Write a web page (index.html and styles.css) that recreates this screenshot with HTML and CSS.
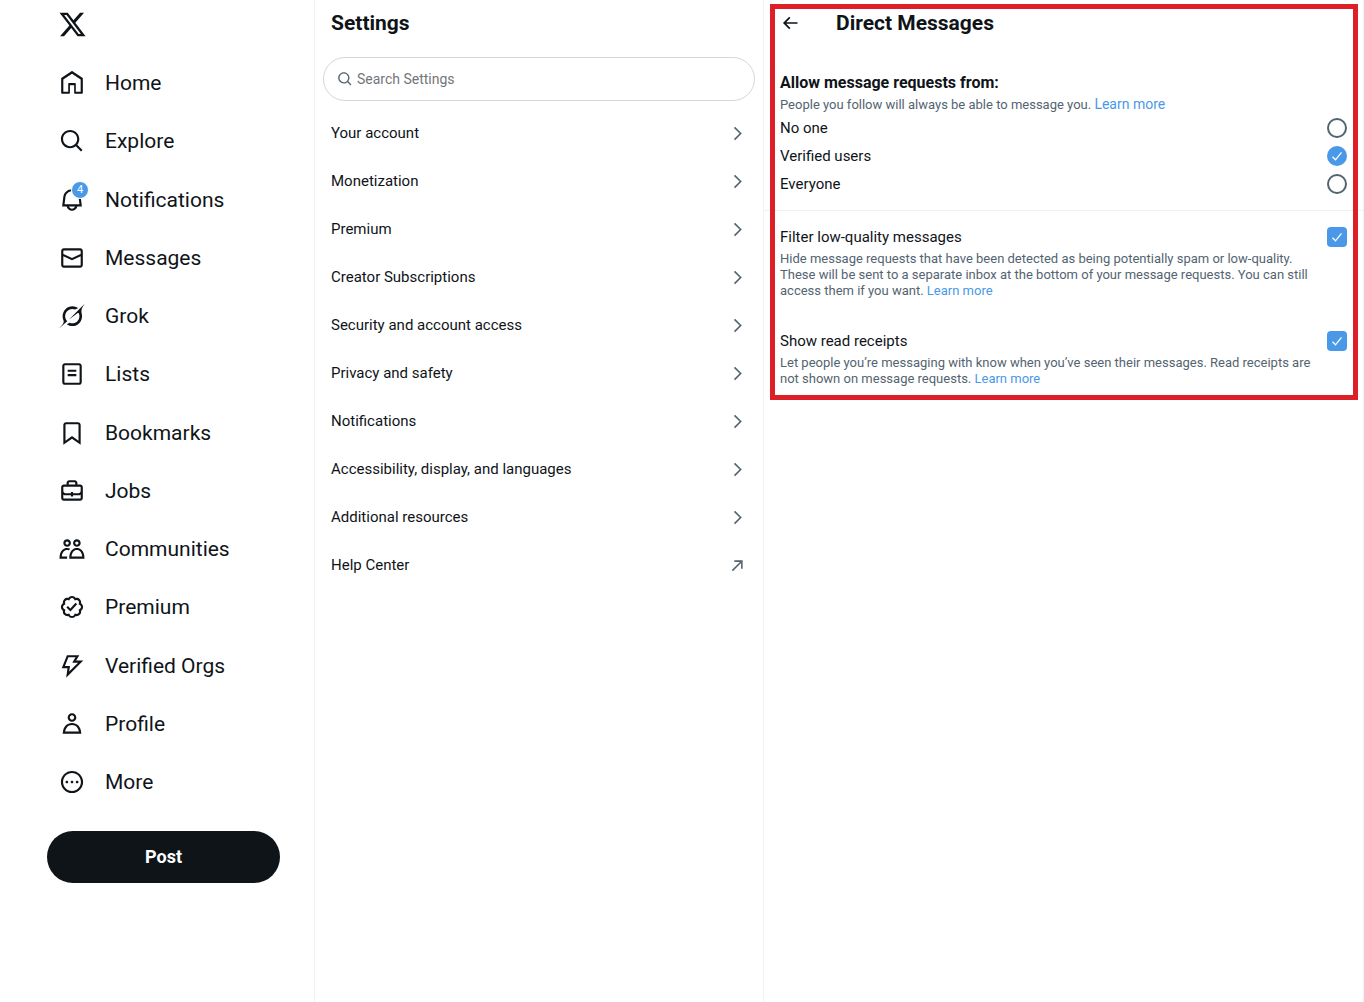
FILE: index.html
```html
<!DOCTYPE html>
<html lang="en">
<head>
<meta charset="utf-8">
<meta name="viewport" content="width=device-width, initial-scale=1">
<title>Direct Messages / X</title>
<link rel="stylesheet" href="styles.css">
</head>
<body>
<div class="app">
  <header class="sidebar">
    <a class="logo" href="#" aria-label="X">
      <svg viewBox="0 0 24 24"><path d="M18.244 2.25h3.308l-7.227 8.26 8.502 11.24H16.17l-5.214-6.817L4.99 21.75H1.68l7.73-8.835L1.254 2.25H8.08l4.713 6.231zm-1.161 17.52h1.833L7.084 4.126H5.117z"/></svg>
    </a>
    <nav class="nav" aria-label="Primary">
      <a class="nav-link" href="#"><span class="nav-icon"><svg viewBox="0 0 24 24"><path d="M21.591 7.146L12.52 1.157c-.316-.21-.724-.21-1.04 0l-9.071 5.99c-.26.173-.409.456-.409.757v13.183c0 .502.418.913.929.913H9.14c.51 0 .929-.41.929-.913v-7.075h3.909v7.075c0 .502.417.913.928.913h6.165c.511 0 .929-.41.929-.913V7.904c0-.301-.158-.584-.408-.758zM20 20l-4.5.01.011-7.097c0-.502-.418-.913-.928-.913H9.44c-.511 0-.929.41-.929.913L8.5 20H4V8.773l8.011-5.342L20 8.764z"/></svg></span>Home</a>
      <a class="nav-link" href="#"><span class="nav-icon"><svg viewBox="0 0 24 24"><path d="M10.25 3.75c-3.59 0-6.5 2.91-6.5 6.5s2.91 6.5 6.5 6.5c1.795 0 3.419-.726 4.596-1.904 1.178-1.177 1.904-2.801 1.904-4.596 0-3.59-2.91-6.5-6.5-6.5zm-8.5 6.5c0-4.694 3.806-8.5 8.5-8.5s8.5 3.806 8.5 8.5c0 1.986-.682 3.815-1.824 5.262l4.781 4.781-1.414 1.414-4.781-4.781c-1.447 1.142-3.276 1.824-5.262 1.824-4.694 0-8.5-3.806-8.5-8.5z"/></svg></span>Explore</a>
      <a class="nav-link" href="#"><span class="nav-icon"><svg viewBox="0 0 24 24"><path d="M19.993 9.042C19.48 5.017 16.054 2 11.996 2s-7.49 3.021-7.999 7.051L2.866 18H7.1c.463 2.282 2.481 4 4.9 4s4.437-1.718 4.9-4h4.236l-1.143-8.958zM12 20c-1.306 0-2.417-.835-2.829-2h5.658c-.412 1.165-1.523 2-2.829 2zm-6.866-4l.847-6.698C6.364 6.272 8.941 4 11.996 4s5.627 2.268 6.013 5.295L18.864 16H5.134z"/></svg><span class="badge">4</span></span>Notifications</a>
      <a class="nav-link" href="#"><span class="nav-icon"><svg viewBox="0 0 24 24"><path d="M1.998 5.5c0-1.381 1.119-2.5 2.5-2.5h15c1.381 0 2.5 1.119 2.5 2.5v13c0 1.381-1.119 2.5-2.5 2.5h-15c-1.381 0-2.5-1.119-2.5-2.5v-13zm2.5-.5c-.276 0-.5.224-.5.5v2.764l8 3.638 8-3.636V5.5c0-.276-.224-.5-.5-.5h-15zm15.5 5.463l-8 3.636-8-3.638V18.5c0 .276.224.5.5.5h15c.276 0 .5-.224.5-.5v-8.037z"/></svg></span>Messages</a>
      <a class="nav-link" href="#"><span class="nav-icon"><svg viewBox="0 0 33 32"><path d="M12.745 20.54l10.97-8.19c.539-.4 1.307-.244 1.564.38 1.349 3.288.746 7.241-1.938 9.955-2.683 2.714-6.417 3.31-9.83 1.954l-3.728 1.745c5.347 3.697 11.84 2.782 15.898-1.324 3.219-3.255 4.216-7.692 3.284-11.693l.008.009c-1.351-5.878.332-8.227 3.782-13.031L33 0l-4.54 4.59v-.014L12.743 20.544m-2.263 1.987c-3.837-3.707-3.175-9.446.1-12.755 2.42-2.449 6.388-3.448 9.852-1.979l3.72-1.737c-.67-.49-1.53-1.017-2.515-1.387-4.455-1.854-9.789-.931-13.41 2.728-3.483 3.523-4.579 8.94-2.697 13.561 1.405 3.454-.899 5.898-3.22 8.364C1.49 30.2.666 31.074 0 32l10.478-9.466"/></svg></span>Grok</a>
      <a class="nav-link" href="#"><span class="nav-icon"><svg viewBox="0 0 24 24"><path d="M3 4.5C3 3.12 4.12 2 5.5 2h13C19.88 2 21 3.12 21 4.5v15c0 1.38-1.12 2.5-2.5 2.5h-13C4.12 22 3 20.88 3 19.5v-15zM5.5 4c-.28 0-.5.22-.5.5v15c0 .28.22.5.5.5h13c.28 0 .5-.22.5-.5v-15c0-.28-.22-.5-.5-.5h-13zM16 10H8V8h8v2zm-8 2h8v2H8v-2z"/></svg></span>Lists</a>
      <a class="nav-link" href="#"><span class="nav-icon"><svg viewBox="0 0 24 24"><path d="M4 4.5C4 3.12 5.119 2 6.5 2h11C18.881 2 20 3.12 20 4.5v18.44l-8-5.71-8 5.71V4.5zM6.5 4c-.276 0-.5.22-.5.5v14.56l6-4.29 6 4.29V4.5c0-.28-.224-.5-.5-.5h-11z"/></svg></span>Bookmarks</a>
      <a class="nav-link" href="#"><span class="nav-icon"><svg viewBox="0 0 24 24"><path d="M19.5 6H17V4.5C17 3.12 15.88 2 14.5 2h-5C8.12 2 7 3.12 7 4.5V6H4.5C3.12 6 2 7.12 2 8.5v10C2 19.88 3.12 21 4.5 21h15c1.38 0 2.5-1.12 2.5-2.5v-10C22 7.12 20.88 6 19.5 6zM9 4.5c0-.28.23-.5.5-.5h5c.28 0 .5.22.5.5V6H9V4.5zm11 14c0 .28-.22.5-.5.5h-15c-.27 0-.5-.22-.5-.5v-3.04c.59.35 1.27.54 2 .54h5v1h2v-1h5c.73 0 1.41-.19 2-.54v3.04zm0-6.49c0 1.1-.9 1.99-2 1.99h-5v-1h-2v1H6c-1.1 0-2-.9-2-2V8.5c0-.28.23-.5.5-.5h15c.28 0 .5.22.5.5v3.51z"/></svg></span>Jobs</a>
      <a class="nav-link" href="#"><span class="nav-icon"><svg viewBox="0 0 24 24"><path d="M7.501 19.917L7.471 21H.472l.029-1.027c.184-6.618 3.736-8.977 7-8.977.963 0 1.95.212 2.87.672-.444.478-.851 1.03-1.212 1.656-.507-.204-1.054-.329-1.658-.329-2.767 0-4.57 2.223-4.938 6.004H7.56c-.023.302-.05.599-.059.917zm15.998.056L23.528 21H9.472l.029-1.027c.184-6.618 3.736-8.977 7-8.977s6.816 2.358 7 8.977zM21.437 19c-.367-3.781-2.17-6.004-4.938-6.004s-4.57 2.223-4.938 6.004h9.875zm-4.938-9c-.799 0-1.527-.279-2.116-.73-.836-.64-1.384-1.638-1.384-2.77 0-1.93 1.567-3.5 3.5-3.5s3.5 1.57 3.5 3.5c0 1.132-.548 2.13-1.384 2.77-.589.451-1.317.73-2.116.73zm-1.5-3.5c0 .827.673 1.5 1.5 1.5s1.5-.673 1.5-1.5-.673-1.5-1.5-1.5-1.5.673-1.5 1.5zM7.5 3C9.433 3 11 4.57 11 6.5S9.433 10 7.5 10 4 8.43 4 6.5 5.567 3 7.5 3zm0 2C6.673 5 6 5.673 6 6.5S6.673 8 7.5 8 9 7.327 9 6.5 8.327 5 7.5 5z"/></svg></span>Communities</a>
      <a class="nav-link" href="#"><span class="nav-icon"><svg viewBox="0 0 24 24"><path d="M8.52 3.59c.8-1.1 2.04-1.84 3.48-1.84s2.68.74 3.49 1.84c1.34-.21 2.74.14 3.76 1.16s1.37 2.42 1.16 3.77c1.1.8 1.84 2.04 1.84 3.48s-.74 2.68-1.84 3.48c.21 1.34-.14 2.75-1.16 3.77s-2.42 1.37-3.76 1.16c-.8 1.1-2.05 1.84-3.49 1.84s-2.68-.74-3.48-1.84c-1.34.21-2.75-.14-3.77-1.16-1.01-1.02-1.37-2.42-1.16-3.77-1.09-.8-1.84-2.04-1.84-3.48s.75-2.68 1.84-3.48c-.21-1.35.14-2.75 1.16-3.77s2.43-1.37 3.77-1.16zm3.48.16c-.85 0-1.66.53-2.12 1.43l-.38.77-.82-.27c-.96-.32-1.91-.12-2.51.49-.6.6-.8 1.54-.49 2.51l.27.81-.77.39c-.9.46-1.43 1.27-1.43 2.12s.53 1.66 1.43 2.12l.77.39-.27.81c-.31.97-.11 1.91.49 2.51.6.61 1.55.81 2.51.49l.82-.27.38.77c.46.9 1.27 1.43 2.12 1.43s1.66-.53 2.12-1.43l.39-.77.82.27c.96.32 1.9.12 2.51-.49.6-.6.8-1.55.48-2.51l-.26-.81.76-.39c.91-.46 1.43-1.27 1.43-2.12s-.52-1.66-1.43-2.12l-.77-.39.27-.81c.32-.97.12-1.91-.48-2.51-.61-.61-1.55-.81-2.51-.49l-.82.27-.39-.77c-.46-.9-1.27-1.43-2.12-1.43zm4.74 5.68l-6.2 6.77-3.74-3.74 1.41-1.42 2.26 2.26 4.8-5.23 1.47 1.36z"/></svg></span>Premium</a>
      <a class="nav-link" href="#"><span class="nav-icon"><svg viewBox="0 0 24 24"><path d="M7.323 2h11.443l-3 5h6.648L6.586 22.83 7.847 14H2.523l4.8-12zm1.354 2l-3.2 8h4.676l-.739 5.17L17.586 9h-5.352l3-5H8.677z"/></svg></span>Verified Orgs</a>
      <a class="nav-link" href="#"><span class="nav-icon"><svg viewBox="0 0 24 24"><path d="M5.651 19h12.698c-.337-1.8-1.023-3.21-1.945-4.19C15.318 13.65 13.838 13 12 13s-3.317.65-4.404 1.81c-.922.98-1.608 2.39-1.945 4.19zm.486-5.56C7.627 11.85 9.648 11 12 11s4.373.85 5.863 2.44c1.477 1.58 2.366 3.8 2.632 6.46l.11 1.1H3.395l.11-1.1c.266-2.66 1.155-4.88 2.632-6.46zM12 4c-1.105 0-2 .9-2 2s.895 2 2 2 2-.9 2-2-.895-2-2-2zM8 6c0-2.21 1.791-4 4-4s4 1.79 4 4-1.791 4-4 4-4-1.79-4-4z"/></svg></span>Profile</a>
      <button class="nav-link" type="button"><span class="nav-icon"><svg viewBox="0 0 24 24"><path d="M3.75 12c0-4.56 3.69-8.25 8.25-8.25s8.25 3.69 8.25 8.25-3.69 8.25-8.25 8.25S3.75 16.56 3.75 12zM12 1.75C6.34 1.75 1.75 6.34 1.75 12S6.34 22.25 12 22.25 22.25 17.66 22.25 12 17.66 1.75 12 1.75zm-4.75 11.5c.69 0 1.25-.56 1.25-1.25s-.56-1.25-1.25-1.25S6 11.31 6 12s.56 1.25 1.25 1.25zm9.5 0c.69 0 1.25-.56 1.25-1.25s-.56-1.25-1.25-1.25-1.25.56-1.25 1.25.56 1.25 1.25 1.25zM13.25 12c0 .69-.56 1.25-1.25 1.25s-1.25-.56-1.25-1.25.56-1.25 1.25-1.25 1.25.56 1.25 1.25z"/></svg></span>More</button>
    </nav>
    <button class="post" type="button">Post</button>
  </header>

  <section class="settings">
    <h2 class="title">Settings</h2>
    <label class="search">
      <svg viewBox="0 0 24 24"><path d="M10.25 3.75c-3.59 0-6.5 2.91-6.5 6.5s2.91 6.5 6.5 6.5c1.795 0 3.419-.726 4.596-1.904 1.178-1.177 1.904-2.801 1.904-4.596 0-3.59-2.91-6.5-6.5-6.5zm-8.5 6.5c0-4.694 3.806-8.5 8.5-8.5s8.5 3.806 8.5 8.5c0 1.986-.682 3.815-1.824 5.262l4.781 4.781-1.414 1.414-4.781-4.781c-1.447 1.142-3.276 1.824-5.262 1.824-4.694 0-8.5-3.806-8.5-8.5z"/></svg>
      <input class="search-input" type="text" placeholder="Search Settings" aria-label="Search Settings">
    </label>
    <nav class="menu" aria-label="Settings">
      <a class="menu-link" href="#">Your account<svg viewBox="0 0 24 24"><path d="M14.586 12L7.543 4.96l1.414-1.42L17.414 12l-8.457 8.46-1.414-1.42L14.586 12z"/></svg></a>
      <a class="menu-link" href="#">Monetization<svg viewBox="0 0 24 24"><path d="M14.586 12L7.543 4.96l1.414-1.42L17.414 12l-8.457 8.46-1.414-1.42L14.586 12z"/></svg></a>
      <a class="menu-link" href="#">Premium<svg viewBox="0 0 24 24"><path d="M14.586 12L7.543 4.96l1.414-1.42L17.414 12l-8.457 8.46-1.414-1.42L14.586 12z"/></svg></a>
      <a class="menu-link" href="#">Creator Subscriptions<svg viewBox="0 0 24 24"><path d="M14.586 12L7.543 4.96l1.414-1.42L17.414 12l-8.457 8.46-1.414-1.42L14.586 12z"/></svg></a>
      <a class="menu-link" href="#">Security and account access<svg viewBox="0 0 24 24"><path d="M14.586 12L7.543 4.96l1.414-1.42L17.414 12l-8.457 8.46-1.414-1.42L14.586 12z"/></svg></a>
      <a class="menu-link" href="#">Privacy and safety<svg viewBox="0 0 24 24"><path d="M14.586 12L7.543 4.96l1.414-1.42L17.414 12l-8.457 8.46-1.414-1.42L14.586 12z"/></svg></a>
      <a class="menu-link" href="#">Notifications<svg viewBox="0 0 24 24"><path d="M14.586 12L7.543 4.96l1.414-1.42L17.414 12l-8.457 8.46-1.414-1.42L14.586 12z"/></svg></a>
      <a class="menu-link" href="#">Accessibility, display, and languages<svg viewBox="0 0 24 24"><path d="M14.586 12L7.543 4.96l1.414-1.42L17.414 12l-8.457 8.46-1.414-1.42L14.586 12z"/></svg></a>
      <a class="menu-link" href="#">Additional resources<svg viewBox="0 0 24 24"><path d="M14.586 12L7.543 4.96l1.414-1.42L17.414 12l-8.457 8.46-1.414-1.42L14.586 12z"/></svg></a>
      <a class="menu-link" href="#">Help Center<svg viewBox="0 0 24 24"><path d="M8 5.500h10.500V16h-2V8.900L6.200 19.200l-1.400-1.400L15.100 7.500H8z"/></svg></a>
    </nav>
  </section>

  <main class="detail">
    <div class="marked">
      <div class="detail-head">
        <button class="back" type="button" aria-label="Back"><svg viewBox="0 0 24 24"><path d="M7.414 13l5.043 5.04-1.414 1.42L3.586 12l7.457-7.46 1.414 1.42L7.414 11H21v2H7.414z"/></svg></button>
        <h2 class="title">Direct Messages</h2>
      </div>
      <fieldset class="requests">
        <legend class="requests-title">Allow message requests from:</legend>
        <p class="note">People you follow will always be able to message you. <a class="note-link" href="#">Learn more</a></p>
        <label class="option">No one<input class="tick radio" type="radio" name="requests"></label>
        <label class="option">Verified users<input class="tick radio" type="radio" name="requests" checked></label>
        <label class="option">Everyone<input class="tick radio" type="radio" name="requests"></label>
      </fieldset>
      <div class="setting">
        <label class="option">Filter low-quality messages<input class="tick box" type="checkbox" checked></label>
        <p class="hint">Hide message requests that have been detected as being potentially spam or low-quality. These will be sent to a separate inbox at the bottom of your message requests. You can still access them if you want. <a class="hint-link" href="#">Learn more</a></p>
      </div>
      <div class="setting">
        <label class="option">Show read receipts<input class="tick box" type="checkbox" checked></label>
        <p class="hint">Let people you’re messaging with know when you’ve seen their messages. Read receipts are not shown on message requests. <a class="hint-link" href="#">Learn more</a></p>
      </div>
    </div>
  </main>
</div>
</body>
</html>
```
FILE: styles.css
```css
* {
  box-sizing: border-box;
}

body {
  margin: 0;
  background: #fff;
  color: #0f1419;
  font-family: Roboto, "Liberation Sans", sans-serif;
  font-size: 15px;
  line-height: 20px;
}

a {
  color: inherit;
  text-decoration: none;
}

button,
input {
  font: inherit;
  color: inherit;
}

svg {
  display: block;
  flex: none;
  fill: currentColor;
}

.app {
  display: grid;
  grid-template-columns: 315px 449px minmax(0, 1fr);
  min-height: 100vh;
}

.sidebar {
  display: flex;
  flex-direction: column;
  padding: 0 34px 0 47px;
  border-right: 1px solid #eff3f4;
}

.logo {
  align-self: flex-start;
  padding: 10px 11px;
}

.logo svg {
  width: 29px;
  height: 29px;
}

.nav {
  display: flex;
  flex-direction: column;
  justify-content: space-between;
  align-items: flex-start;
  min-height: 749px;
  margin-top: 9px;
}

.nav-link {
  display: flex;
  align-items: center;
  gap: 20px;
  padding: 12px;
  border: 0;
  background: none;
  font-size: 21px;
  line-height: 26px;
  cursor: pointer;
}

.nav-icon {
  position: relative;
}

.nav-icon svg {
  width: 26px;
  height: 26px;
}

.badge {
  position: absolute;
  top: -6px;
  right: -4px;
  width: 18px;
  height: 18px;
  border: 1px solid #fff;
  border-radius: 50%;
  background: #4a99e9;
  color: #fff;
  font-size: 11px;
  line-height: 16px;
  text-align: center;
}

.post {
  min-height: 52px;
  margin-top: 24px;
  border: 0;
  border-radius: 26px;
  background: #0f1419;
  color: #fff;
  font-size: 18px;
  font-weight: 700;
}

.settings {
  border-right: 1px solid #eff3f4;
}

.title {
  margin: 0;
  font-size: 21px;
  font-weight: 700;
  line-height: 46px;
}

.settings .title {
  padding: 0 16px;
}

.search {
  display: flex;
  align-items: center;
  gap: 4px;
  height: 44px;
  margin: 11px 8px 8px;
  padding: 0 13px;
  border: 1px solid #cfd9de;
  border-radius: 22px;
  color: #536471;
}

.search svg {
  width: 16px;
  height: 16px;
}

.search-input {
  flex: 1;
  min-width: 0;
  padding: 0;
  border: 0;
  outline: 0;
  background: none;
  font-size: 14px;
}

.search-input::placeholder {
  color: #72767a;
}

.menu-link {
  display: flex;
  align-items: center;
  justify-content: space-between;
  padding: 14px 16px;
}

.menu-link svg {
  width: 19px;
  height: 19px;
  color: #536471;
}

.detail {
  border-right: 1px solid #eff3f4;
}

.marked {
  position: relative;
  padding-bottom: 13px;
}

/* Red frame laid over the highlighted settings */
.marked::after {
  content: "";
  position: absolute;
  inset: 4px 5px 0 6px;
  border: 5px solid #dd2027;
  pointer-events: none;
}

.detail-head {
  display: flex;
  align-items: center;
  gap: 36px;
  padding: 0 16px;
}

.back {
  padding: 0;
  border: 0;
  background: none;
  cursor: pointer;
}

.back svg {
  width: 20px;
  height: 20px;
}

.requests {
  margin: 0;
  padding: 27px 16px 12px;
  border: 0;
  border-bottom: 1px solid #eff3f4;
}

.requests-title {
  float: left;
  width: 100%;
  padding: 0;
  font-size: 16px;
  font-weight: 700;
}

.note {
  clear: both;
  margin: 0;
  padding: 4px 0 1px;
  color: #536471;
  font-size: 13px;
  line-height: 16px;
}

.note-link {
  color: #4a99e9;
  font-size: 14px;
  line-height: 14px;
}

.option {
  display: flex;
  align-items: center;
  justify-content: space-between;
}

.requests .option {
  padding: 4px 0;
}

.tick {
  appearance: none;
  flex: none;
  width: 20px;
  height: 20px;
  margin: 0;
  border: 2px solid #536471;
}

.tick:checked {
  border: 0;
  background: #4a99e9 url("data:image/svg+xml,%3Csvg xmlns='http://www.w3.org/2000/svg' viewBox='0 0 20 20'%3E%3Cpath d='M5.500 10.800l3 3 6-7.500' fill='none' stroke='white' stroke-width='1.300'/%3E%3C/svg%3E");
}

.radio {
  border-radius: 50%;
}

.box {
  border-radius: 4px;
}

.setting {
  padding: 16px 16px 0;
}

.setting + .setting {
  padding-top: 32px;
}

.hint {
  margin: 4px 0 0;
  padding-right: 20px;
  color: #536471;
  font-size: 13px;
  line-height: 16px;
}

.hint-link {
  color: #4a99e9;
}
```
